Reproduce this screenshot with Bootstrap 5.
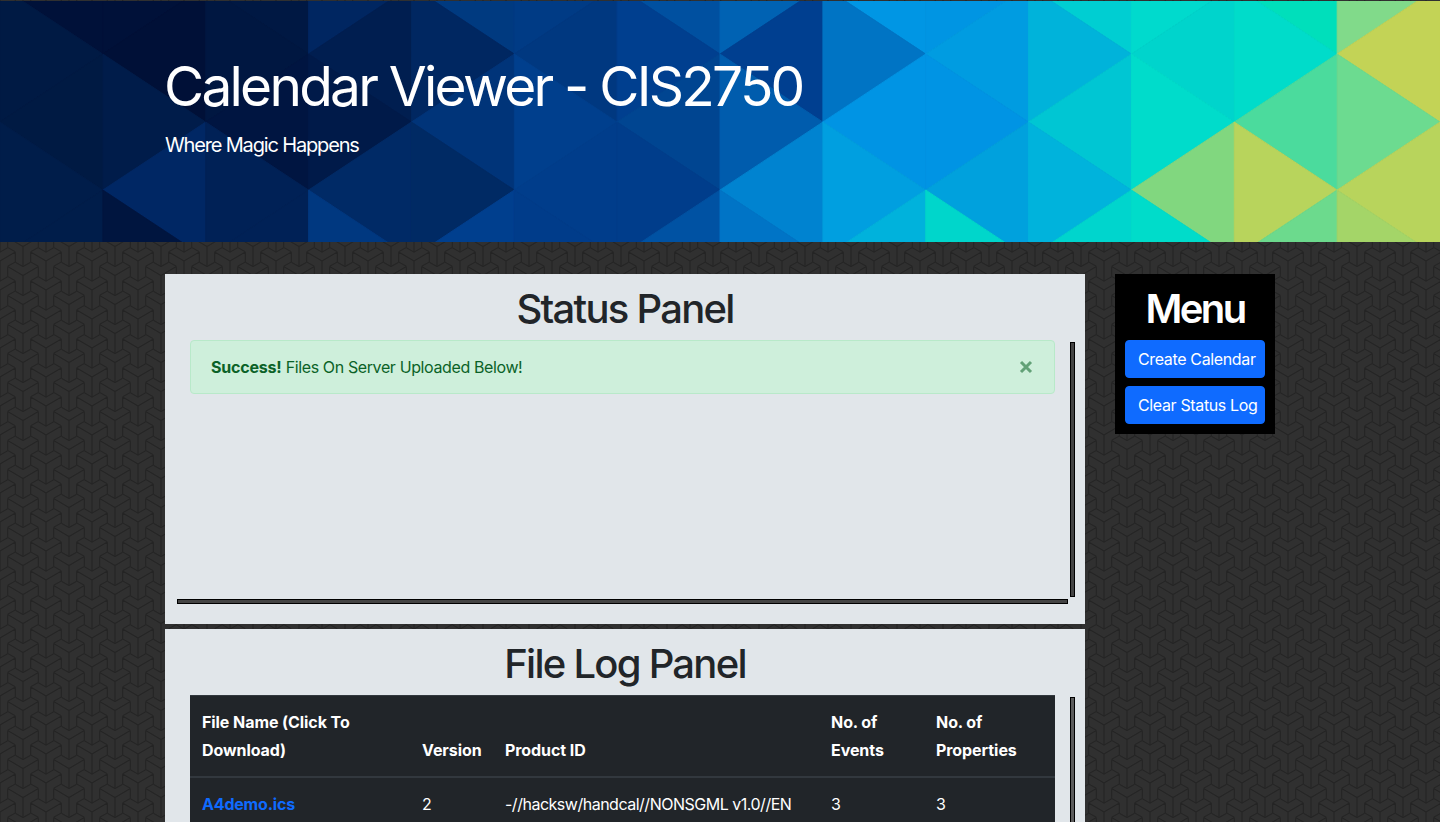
<!DOCTYPE html>
<html lang="en">
<head>
<meta charset="utf-8">
<meta name="viewport" content="width=device-width, initial-scale=1">
<title>Calendar Viewer</title>
<link href="https://cdn.jsdelivr.net/npm/bootstrap@5.3.0/dist/css/bootstrap.min.css" rel="stylesheet">
<style>
html{background:#2b2b2b}
body{font-family:Inter,"Liberation Sans",sans-serif;height:100vh;overflow:hidden;line-height:24px;position:relative;isolation:isolate;
background:#303030}
.tiles{position:absolute;inset:0;width:100%;height:100%;z-index:-1}
.page-wrap{width:1110px;margin:0 auto}
.columns{gap:30px;padding-top:32px}
.panels{gap:5px;width:920px}
.hero{height:241px;margin-top:1px;position:relative;overflow:hidden}
.hero svg{position:absolute;left:0;top:0;width:100%;height:241px}
.hero .page-wrap{position:relative;padding-top:52px}
.hero h1{font-size:55px;font-weight:400;line-height:67px;margin:0 0 13px -1px;letter-spacing:-2.76px}
.hero p{font-size:20px;line-height:24px;margin:0;letter-spacing:-1.16px}
.panel{height:350px;background:#e1e6ea;padding:10px}
.panel h1,.menu-box h1{font-size:40px;font-weight:500;line-height:50px;margin:0 0 6px;text-align:center;color:#212529;letter-spacing:-1.75px}
.menu-box{width:160px;background:#000;padding:10px}
.menu-box h1{color:#fff;font-weight:600;letter-spacing:-2.6px}
.menu-box .btn{height:38px;padding:6px 0 6px 12px;border:1px solid #0f6bff;background:#0f6bff;border-radius:4px;white-space:nowrap;text-align:left;line-height:24px;letter-spacing:-.36px}
.scroll-area{display:grid;grid-template-columns:880px 5px;column-gap:15px;grid-template-rows:259px 5px}
.scroll-body{padding-left:15px}
.vbar{border:1px solid #000;background:#444;margin:2px 0}
.vbar.long{background:#5c5c5c}
.hbar{border:1px solid #000;background:#444;margin-left:2px;margin-right:-13px}
.notice{height:54px;background:#ceefdb;border:1px solid #b8e9c9;border-radius:4px;padding:0 21px 0 20px;color:#0b6227;letter-spacing:-.38px}
.notice b{font-weight:700;letter-spacing:-.2px}
.shut{opacity:.55}
.log{width:865px;table-layout:fixed;color:#fff;background:#212529;line-height:28px;border-top:1px solid #32383e;border-collapse:separate;border-spacing:0}
.log th,.log td{padding:12px;vertical-align:bottom;white-space:nowrap}
.log th{letter-spacing:-.07px}
.log td{letter-spacing:-.49px}
.log thead th{border-bottom:2px solid #32383e}
.log a{color:#0f6bff;font-weight:700;text-decoration:none;letter-spacing:-.19px}
.log .c1{width:220px}.log .c2{width:83px}.log .c3{width:326px}.log .c4{width:105px}.log .c5{width:131px}
</style>
</head>
<body>
<svg class="tiles" aria-hidden="true"><defs><pattern id="tri" width="46" height="29" patternUnits="userSpaceOnUse"><g fill="none" stroke="#242424" stroke-width="1.2"><path id="arm" d="M7.67 5.6L23 14.5L38.33 5.6M23 14.5V34.6M15.33 1.2L23 5.6L30.67 1.2M7.67 5.6V15.4L15.33 19.8M38.33 5.6V15.4L30.67 19.8"/><use href="#arm" x="-23" y="-14.5"/><use href="#arm" x="23" y="-14.5"/><use href="#arm" x="-23" y="14.5"/><use href="#arm" x="23" y="14.5"/><use href="#arm" y="-29"/></g></pattern></defs><rect width="100%" height="100%" fill="url(#tri)"/></svg>
<header class="hero text-white">
<svg id="mosaic" viewBox="0 1 1440 241" preserveAspectRatio="none" aria-hidden="true"></svg>
<div class="page-wrap"><h1>Calendar Viewer - CIS2750</h1><p>Where Magic Happens</p></div>
</header>
<main class="page-wrap columns d-flex align-items-start">
<div class="panels d-flex flex-column">
<section class="panel"><h1>Status Panel</h1>
<div class="scroll-area"><div class="scroll-body"><div class="notice d-flex align-items-center justify-content-between"><div><b>Success!</b> Files On Server Uploaded Below!</div><svg class="shut" width="14" height="14" viewBox="0 0 14 14" stroke="#0b6227" stroke-width="3"><path d="M2 2L12 12M12 2L2 12"/></svg></div></div><div class="vbar"></div><div class="hbar"></div></div></section>
<section class="panel"><h1>File Log Panel</h1>
<div class="scroll-area"><div class="scroll-body"><table class="log"><colgroup><col class="c1"><col class="c2"><col class="c3"><col class="c4"><col class="c5"></colgroup>
<thead><tr><th>File Name (Click To<br>Download)</th><th>Version</th><th>Product ID</th><th>No. of<br>Events</th><th>No. of<br>Properties</th></tr></thead>
<tbody><tr><td><a href="#">A4demo.ics</a></td><td>2</td><td>-//hacksw/handcal//NONSGML v1.0//EN</td><td>3</td><td>3</td></tr></tbody></table></div><div class="vbar long"></div></div></section>
</div>
<aside class="menu-box"><h1>Menu</h1><div class="d-grid gap-2"><button class="btn text-white">Create Calendar</button><button class="btn text-white">Clear Status Log</button></div></aside>
</main>
<script src="https://cdn.jsdelivr.net/npm/bootstrap@5.3.0/dist/js/bootstrap.bundle.min.js"></script>
<script>
// Colours of the five triangles in each column, top to bottom
const tones=[
'001139 001a44 001a43 001d4a 001d4a','001139 001037 001c4a 002764 00153f','001843 001741 001541 002156 002156','002661 001e50 001a49 002a66 003880',
'003a80 002761 003479 002a64 003f8e','003b85 003880 003f8d 003d8b 003c8a','0050a0 003f8f 004591 003d8b 0052a3','0062b3 003f90 005cad 0083d0 0074c6',
'0096e4 0074c4 0094e4 009fe0 00b2dc','0095e3 009ce1 0094e4 00a1dd 00d6cb','00ced2 00b3da 00c6d3 00b3dc 00d5cd','00dacd 00d4cc 00dccb 81d77f 00dcca',
'00dfbb 00dcca 4bdb9d b8d45c 6cda8d','81da8a c3d356 6cdb90 b8d45c a4d568'];
let s='';
tones.forEach((t,k)=>{
 const w=1440/14,l=k*w,r=l+w,odd=k%2;
 t.split(' ').forEach((c,i)=>{
  const y=-82+i*68,base=(i%2===0)?(odd?l:r):(odd?r:l),tip=base===l?r:l;
  s+=`<path fill="#${c}" stroke="#${c}" stroke-width=".9" stroke-linejoin="bevel" d="M${base} ${y}V${y+136}L${tip} ${y+68}Z"/>`;
 });
});
document.getElementById('mosaic').innerHTML=s;
</script>
</body>
</html>
